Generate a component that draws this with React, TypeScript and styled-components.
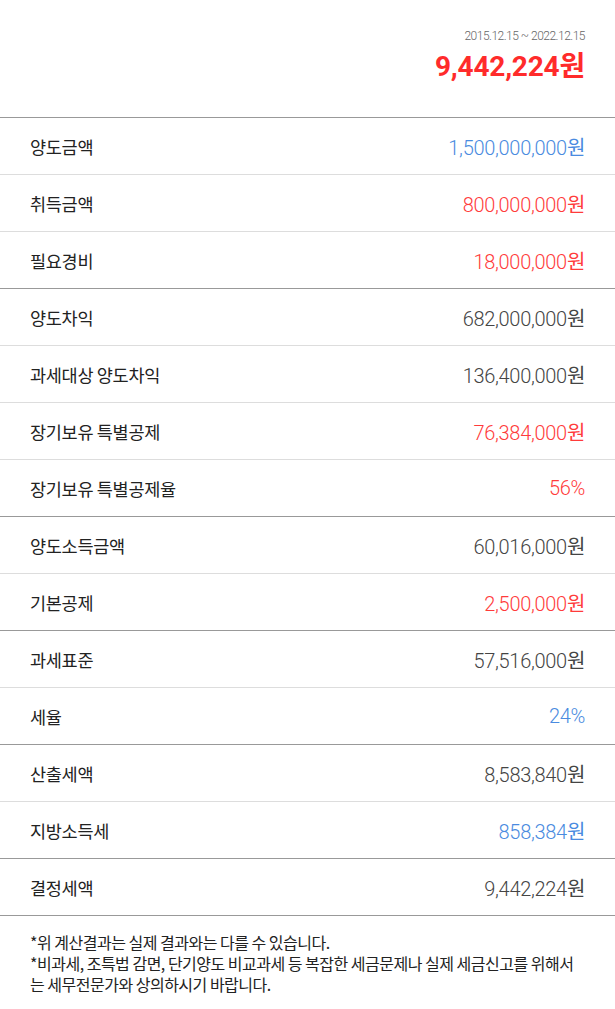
import styled, { createGlobalStyle } from 'styled-components'

const GlobalStyle = createGlobalStyle`
  html, body {
    margin: 0;
    padding: 0;
    background: #fff;
  }
  body {
    font-family: Roboto, "Noto Sans CJK KR", sans-serif;
    color: #222;
  }
`

const Page = styled.main`
  width: 615px;
  background: #fff;
`

const Header = styled.header`
  display: flex;
  flex-direction: column;
  align-items: flex-end;
  padding: 29px 30px 0 0;
  height: 117px;
  box-sizing: border-box;
`

const Period = styled.div`
  font-family: Roboto, "Noto Sans CJK KR", sans-serif;
  font-size: 12px;
  font-weight: 300;
  color: #666;
  letter-spacing: -0.5px;
  line-height: 14px;
`

const Total = styled.div`
  margin-top: 5px;
  font-family: Roboto, "Noto Sans CJK KR", sans-serif;
  font-size: 28px;
  font-weight: 700;
  color: #ff2b2b;
  line-height: 32px;
  letter-spacing: -0.2px;
`

// each row carries its own top line: dark at the start of a group, light inside it
const Row = styled.div`
  display: flex;
  align-items: center;
  justify-content: space-between;
  height: 57px;
  box-sizing: border-box;
  padding: 0 30px;
  border-top: 1px solid #ddd;
  &:first-child {
    border-top-color: #999;
  }
`

const Label = styled.span`
  font-family: "Noto Sans CJK KR", sans-serif;
  font-size: 17.5px;
  color: #222;
  letter-spacing: -0.3px;
`

type Tone = 'plain' | 'blue' | 'red'

const toneColor: Record<Tone, string> = {
  plain: '#444',
  blue: '#4a8be0',
  red: '#ff3b3b',
}

const Value = styled.span<{ $tone: Tone }>`
  font-family: Roboto, "Noto Sans CJK KR", sans-serif;
  font-size: 20px;
  font-weight: 300;
  color: ${(p) => toneColor[p.$tone]};
  letter-spacing: -0.3px;
`

const Unit = styled.span<{ $bold?: boolean }>`
  font-family: "Noto Sans CJK KR", sans-serif;
  font-weight: ${(p) => (p.$bold ? 700 : 400)};
`

const Notes = styled.footer`
  border-top: 1px solid #999;
  padding: 16px 30px 20px;
  font-family: "Noto Sans CJK KR", sans-serif;
  font-size: 16px;
  line-height: 21px;
  color: #222;
  letter-spacing: -0.5px;
  p {
    margin: 0;
  }
`

type Item = { label: string; value: string; unit?: string; tone: Tone }

const sections: Item[][] = [
  [
    { label: '양도금액', value: '1,500,000,000', unit: '원', tone: 'blue' },
    { label: '취득금액', value: '800,000,000', unit: '원', tone: 'red' },
    { label: '필요경비', value: '18,000,000', unit: '원', tone: 'red' },
  ],
  [
    { label: '양도차익', value: '682,000,000', unit: '원', tone: 'plain' },
    { label: '과세대상 양도차익', value: '136,400,000', unit: '원', tone: 'plain' },
    { label: '장기보유 특별공제', value: '76,384,000', unit: '원', tone: 'red' },
    { label: '장기보유 특별공제율', value: '56%', tone: 'red' },
  ],
  [
    { label: '양도소득금액', value: '60,016,000', unit: '원', tone: 'plain' },
    { label: '기본공제', value: '2,500,000', unit: '원', tone: 'red' },
  ],
  [
    { label: '과세표준', value: '57,516,000', unit: '원', tone: 'plain' },
    { label: '세율', value: '24%', tone: 'blue' },
  ],
  [
    { label: '산출세액', value: '8,583,840', unit: '원', tone: 'plain' },
    { label: '지방소득세', value: '858,384', unit: '원', tone: 'blue' },
  ],
  [{ label: '결정세액', value: '9,442,224', unit: '원', tone: 'plain' }],
]

export default function App() {
  return (
    <Page>
      <GlobalStyle />
      <Header>
        <Period>2015.12.15 ~ 2022.12.15</Period>
        <Total>
          9,442,224<Unit $bold>원</Unit>
        </Total>
      </Header>

      {sections.map((items, i) => (
        <section key={i}>
          {items.map((it) => (
            <Row key={it.label}>
              <Label>{it.label}</Label>
              <Value $tone={it.tone}>
                {it.value}
                {it.unit && <Unit>{it.unit}</Unit>}
              </Value>
            </Row>
          ))}
        </section>
      ))}

      <Notes>
        <p>*위 계산결과는 실제 결과와는 다를 수 있습니다.</p>
        <p>
          *비과세, 조특법 감면, 단기양도 비교과세 등 복잡한 세금문제나 실제 세금신고를 위해서는
          세무전문가와 상의하시기 바랍니다.
        </p>
      </Notes>
    </Page>
  )
}
